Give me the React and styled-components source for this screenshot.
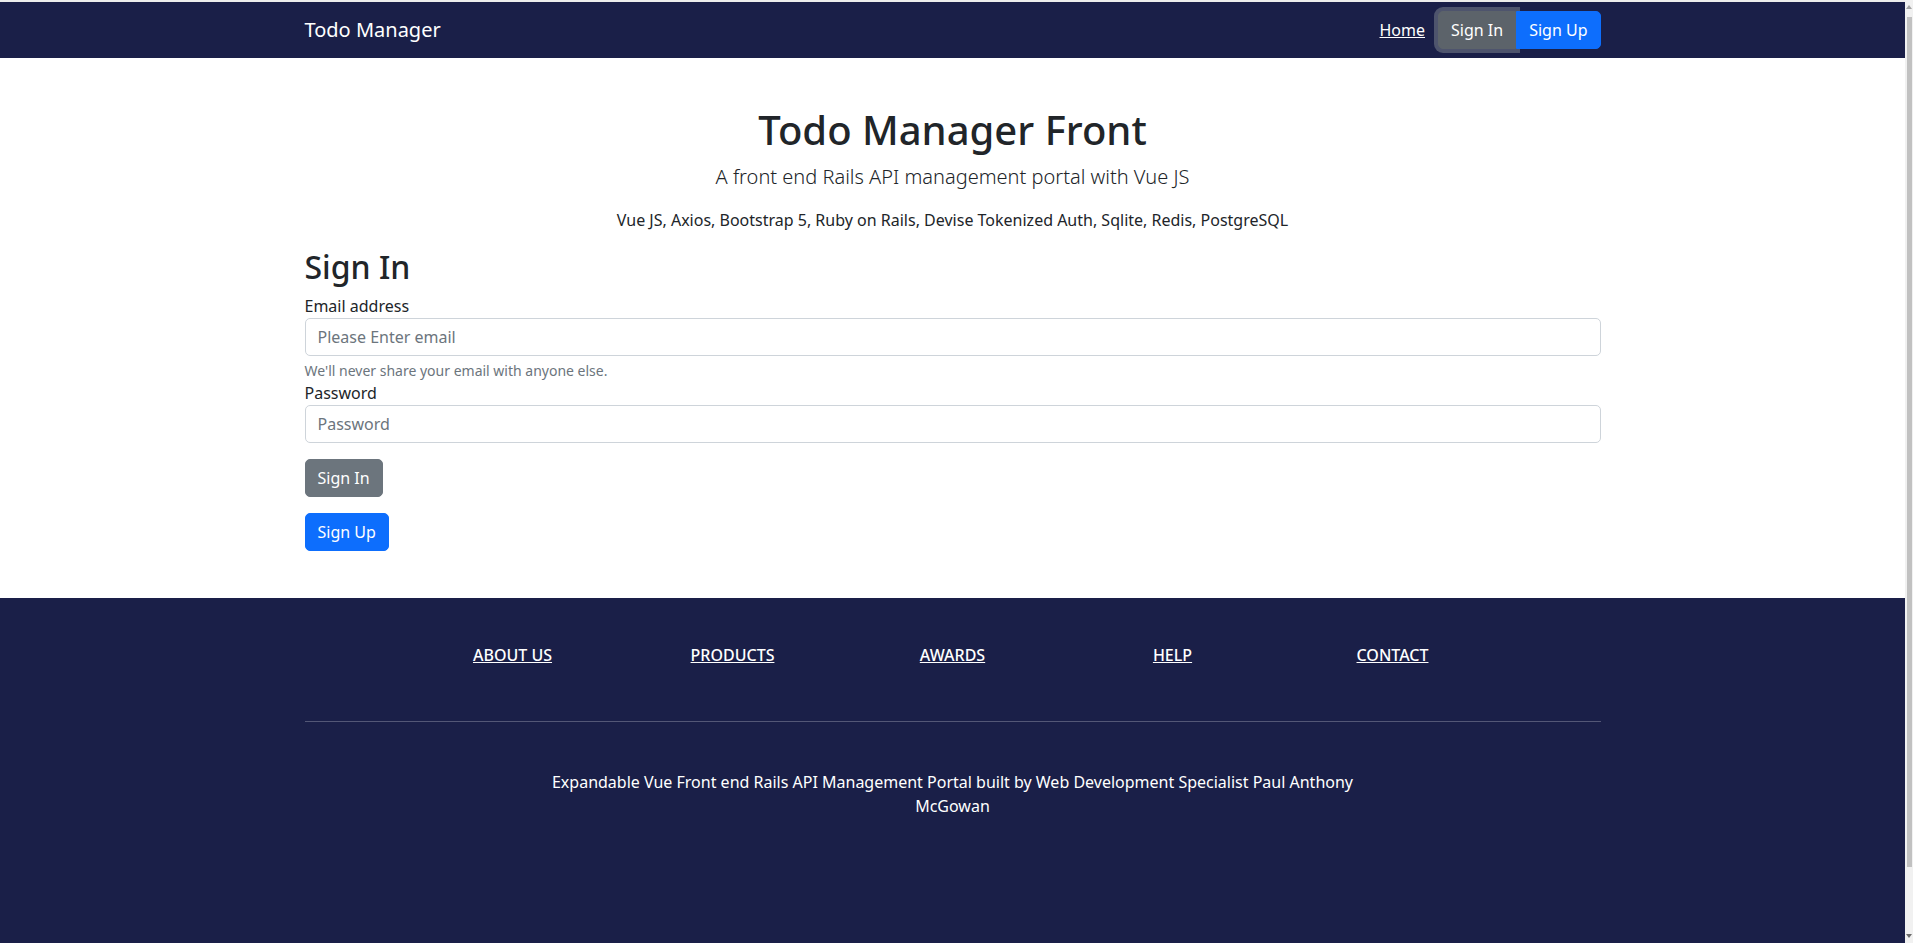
import styled, { createGlobalStyle } from "styled-components";

const GlobalStyle = createGlobalStyle`
  body {
    margin: 0;
    padding-right: 8px;
    border-top: 2px solid #ececec;
    font-family: "Noto Sans", "Open Sans", sans-serif;
    font-size: 16px;
    line-height: 1.5;
    color: #212529;
    background: #fff;
  }
  * {
    box-sizing: border-box;
  }
`;

const navy = "#1a1f48";

/* stand-in for the browser's classic scrollbar seen in the screenshot */
const ScrollTrack = styled.div`
  position: fixed;
  top: 0;
  right: 0;
  width: 8px;
  height: 100vh;
  background: #f1f1f1;
  display: flex;
  flex-direction: column;
  align-items: center;
`;

const Arrow = styled.div`
  height: 17px;
  width: 100%;
  display: flex;
  justify-content: center;
  align-items: ${(p) => (p.$down ? "flex-end" : "flex-start")};
  padding: 5px 0;
  &::before {
    content: "";
    width: 0;
    height: 0;
    border-left: 3px solid transparent;
    border-right: 3px solid transparent;
    ${(p) =>
      p.$down
        ? "border-top: 4px solid #6b6b6b;"
        : "border-bottom: 4px solid #a3a3a3;"}
  }
`;

const Thumb = styled.div`
  width: 5px;
  margin-left: 1px;
  height: 850px;
  background: #c1c1c1;
`;

const TrackGap = styled.div`
  flex: 1;
`;

const Container = styled.div`
  max-width: 1320px;
  margin: 0 auto;
  padding: 0 12px;
`;

const Navbar = styled.nav`
  background: ${navy};
  height: 56px;
`;

const NavInner = styled(Container)`
  height: 100%;
  display: flex;
  align-items: center;
  justify-content: space-between;
`;

const Brand = styled.a`
  color: #fff;
  font-size: 20px;
  line-height: 30px;
  text-decoration: none;
`;

const NavItems = styled.div`
  display: flex;
  align-items: center;
`;

const NavLink = styled.a`
  color: #fff;
  text-decoration: underline;
  margin-right: 13px;
`;

const Button = styled.button`
  display: inline-block;
  font-family: inherit;
  font-size: 16px;
  line-height: 24px;
  padding: 6px 12px;
  border: 1px solid ${(p) => p.$bg};
  border-radius: 5px;
  background: ${(p) => p.$bg};
  color: #fff;
  cursor: pointer;
`;

const NavSignIn = styled(Button)`
  border-radius: 5px 0 0 5px;
  box-shadow: 0 0 0 4px rgba(130, 138, 145, 0.5);
`;

const NavSignUp = styled(Button)`
  border-radius: 0 5px 5px 0;
`;

const Main = styled(Container)`
  padding-top: 48px;
  padding-bottom: 47px;
`;

const Header = styled.header`
  text-align: center;
`;

const Title = styled.h1`
  margin: 0 0 8px;
  font-size: 40px;
  font-weight: 500;
  line-height: 1.2;
`;

const Lead = styled.p`
  margin: 0 0 16px;
  font-size: 20px;
  font-weight: 300;
  line-height: 30px;
`;

const Stack = styled.p`
  margin: 0 0 16px;
`;

const FormTitle = styled.h2`
  margin: 0 0 8px;
  font-size: 32px;
  font-weight: 500;
  line-height: 1.2;
`;

const Label = styled.label`
  display: block;
`;

const Input = styled.input`
  display: block;
  width: 100%;
  height: 38px;
  padding: 6px 12px;
  font-family: inherit;
  font-size: 16px;
  line-height: 24px;
  color: #212529;
  border: 1px solid #ced4da;
  border-radius: 5px;
  &::placeholder {
    color: #6c757d;
  }
`;

const Help = styled.div`
  margin-top: 4px;
  font-size: 14px;
  line-height: 21px;
  color: #6c757d;
`;

const Actions = styled.div`
  display: flex;
  flex-direction: column;
  align-items: flex-start;
  gap: 16px;
  margin-top: 16px;
`;

const Footer = styled.footer`
  background: ${navy};
  color: #fff;
  padding-top: 48px;
  padding-bottom: 174px;
`;

const LinkRow = styled.div`
  display: flex;
  justify-content: center;
  margin: 0 -12px;
  text-align: center;
`;

const LinkCol = styled.div`
  width: 16.6667%;
  padding: 0 12px;
`;

const FooterLink = styled.h6`
  margin: 0 0 8px;
  font-size: 16px;
  font-weight: 500;
  line-height: 1.2;
  text-transform: uppercase;
  a {
    color: #fff;
    text-decoration: underline;
  }
`;

const Rule = styled.hr`
  margin: 47px 0 48px;
  border: 0;
  border-top: 1px solid rgba(255, 255, 255, 0.25);
`;

const TextRow = styled.div`
  display: flex;
  justify-content: center;
  margin: 0 -12px;
`;

const TextCol = styled.div`
  width: 66.6667%;
  padding: 0 12px;
  text-align: center;
  p {
    margin: 0 0 16px;
  }
`;

const links = ["About us", "Products", "Awards", "Help", "Contact"];

export default function App() {
  return (
    <>
      <GlobalStyle />
      <Navbar>
        <NavInner>
          <Brand href="#">Todo Manager</Brand>
          <NavItems>
            <NavLink href="#">Home</NavLink>
            <NavSignIn $bg="#5c636a">Sign In</NavSignIn>
            <NavSignUp $bg="#0d6efd">Sign Up</NavSignUp>
          </NavItems>
        </NavInner>
      </Navbar>
      <Main>
        <Header>
          <Title>Todo Manager Front</Title>
          <Lead>A front end Rails API management portal with Vue JS</Lead>
          <Stack>
            Vue JS, Axios, Bootstrap 5, Ruby on Rails, Devise Tokenized Auth,
            Sqlite, Redis, PostgreSQL
          </Stack>
        </Header>
        <FormTitle>Sign In</FormTitle>
        <form onSubmit={(e) => e.preventDefault()}>
          <Label htmlFor="email">Email address</Label>
          <Input id="email" type="email" placeholder="Please Enter email" />
          <Help>We'll never share your email with anyone else.</Help>
          <Label htmlFor="password">Password</Label>
          <Input id="password" type="password" placeholder="Password" />
          <Actions>
            <Button $bg="#6c757d">Sign In</Button>
            <Button $bg="#0d6efd">Sign Up</Button>
          </Actions>
        </form>
      </Main>
      <Footer>
        <Container>
          <LinkRow>
            {links.map((l) => (
              <LinkCol key={l}>
                <FooterLink>
                  <a href="#">{l}</a>
                </FooterLink>
              </LinkCol>
            ))}
          </LinkRow>
          <Rule />
          <TextRow>
            <TextCol>
              <p>
                Expandable Vue Front end Rails API Management Portal built by
                Web Development Specialist Paul Anthony McGowan
              </p>
            </TextCol>
          </TextRow>
        </Container>
      </Footer>
      <ScrollTrack>
        <Arrow />
        <Thumb />
        <TrackGap />
        <Arrow $down />
      </ScrollTrack>
    </>
  );
}
